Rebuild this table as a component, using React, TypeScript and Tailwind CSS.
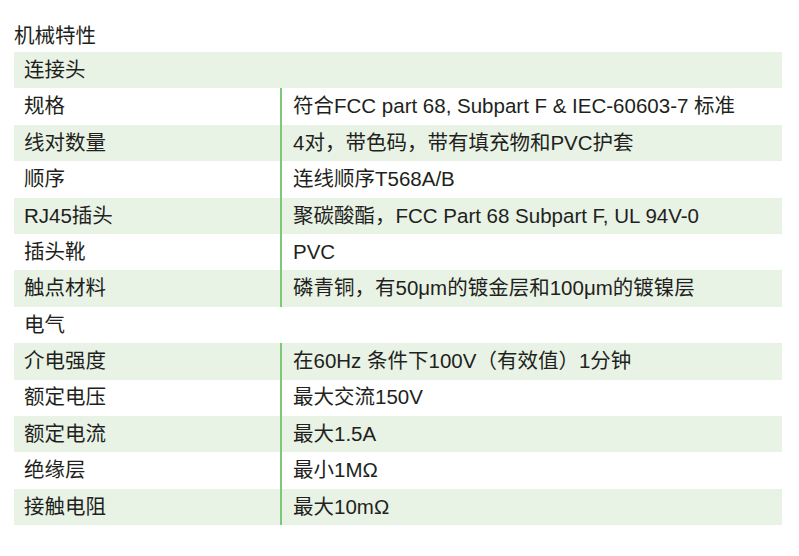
type Row =
  | { kind: "section"; label: string }
  | { kind: "item"; label: string; value: string };

const rows: Row[] = [
  { kind: "section", label: "连接头" },
  { kind: "item", label: "规格", value: "符合FCC part 68, Subpart F & IEC-60603-7 标准" },
  { kind: "item", label: "线对数量", value: "4对，带色码，带有填充物和PVC护套" },
  { kind: "item", label: "顺序", value: "连线顺序T568A/B" },
  { kind: "item", label: "RJ45插头", value: "聚碳酸酯，FCC Part 68 Subpart F, UL 94V-0" },
  { kind: "item", label: "插头靴", value: "PVC" },
  { kind: "item", label: "触点材料", value: "磷青铜，有50μm的镀金层和100μm的镀镍层" },
  { kind: "section", label: "电气" },
  { kind: "item", label: "介电强度", value: "在60Hz 条件下100V（有效值）1分钟" },
  { kind: "item", label: "额定电压", value: "最大交流150V" },
  { kind: "item", label: "额定电流", value: "最大1.5A" },
  { kind: "item", label: "绝缘层", value: "最小1MΩ" },
  { kind: "item", label: "接触电阻", value: "最大10mΩ" },
];

export default function App() {
  return (
    <div className="h-[556px] w-[799px] bg-white pl-[14px] font-['Liberation_Sans','Noto_Sans_CJK_SC',sans-serif] text-[20.5px] text-[#231f20]">
      <div className="h-[52px] pt-[22px] leading-[28px]">机械特性</div>
      <div className="w-[768px]">
        {rows.map((row, i) => (
          <div
            key={row.label}
            className={`flex h-[36.4px] items-center leading-none ${
              i % 2 === 0 ? "bg-[#e8f3e6]" : "bg-white"
            }`}
          >
            {row.kind === "section" ? (
              <div className="pl-[10px]">{row.label}</div>
            ) : (
              <>
                <div className="w-[266px] shrink-0 pl-[10px]">{row.label}</div>
                <div className="flex h-full items-center border-l-[2.5px] border-[#7dc778] pl-[11px]">
                  {row.value}
                </div>
              </>
            )}
          </div>
        ))}
      </div>
    </div>
  );
}
